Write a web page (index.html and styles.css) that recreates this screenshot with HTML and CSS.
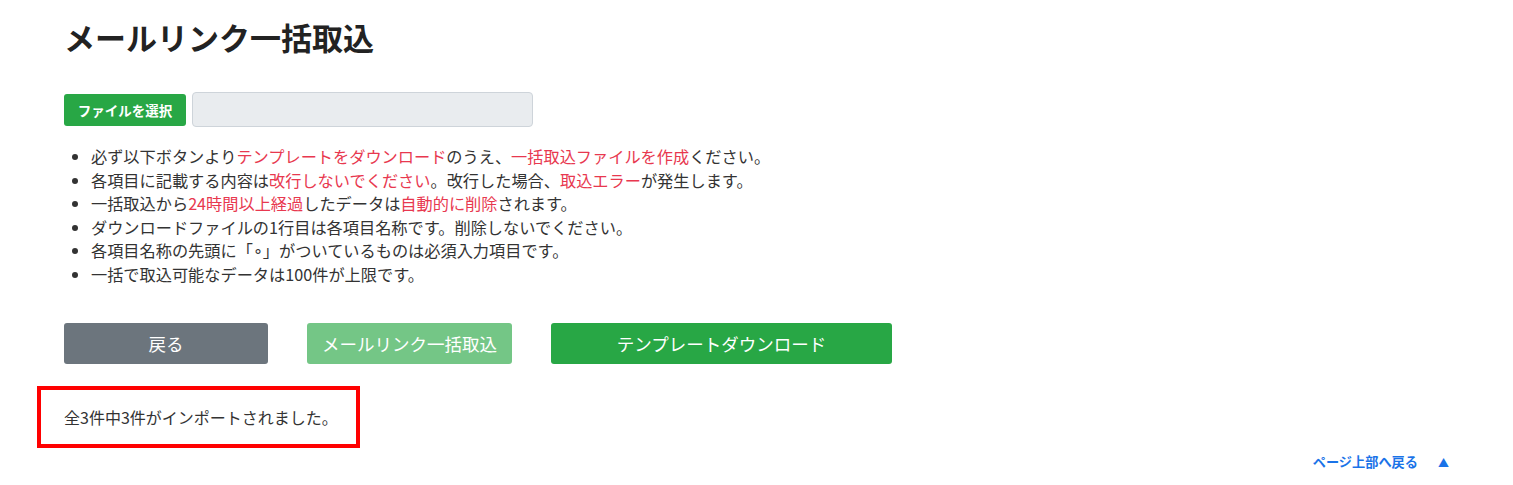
FILE: index.html
```html
<!DOCTYPE html>
<html lang="ja">
<head>
    <meta charset="UTF-8">
    <meta name="viewport" content="width=device-width, initial-scale=1.0">
    <title>メールリンク一括取込</title>
    <link rel="stylesheet" href="styles.css">
</head>
<body>

    <div class="page">
        <h1 class="page-title">メールリンク一括取込</h1>

        <div class="file-row">
            <label class="file-btn" for="importFile">ファイルを選択</label>
            <input type="file" id="importFile" class="file-hidden">
            <div class="file-name"></div>
        </div>

        <ul class="notes">
            <li>必ず以下ボタンより<span class="em">テンプレートをダウンロード</span>のうえ、<span class="em">一括取込ファイルを作成</span>ください。</li>
            <li>各項目に記載する内容は<span class="em">改行しないでください</span>。改行した場合、<span class="em">取込エラー</span>が発生します。</li>
            <li>一括取込から<span class="em">24時間以上経過</span>したデータは<span class="em">自動的に削除</span>されます。</li>
            <li>ダウンロードファイルの1行目は各項目名称です。削除しないでください。</li>
            <li>各項目名称の先頭に「∘」がついているものは必須入力項目です。</li>
            <li>一括で取込可能なデータは100件が上限です。</li>
        </ul>

        <div class="actions">
            <button class="btn btn-back">戻る</button>
            <button class="btn btn-import" disabled>メールリンク一括取込</button>
            <button class="btn btn-template">テンプレートダウンロード</button>
        </div>

        <div class="result">全3件中3件がインポートされました。</div>

        <div class="to-top">
            <a href="#">ページ上部へ戻る<span class="arrow">▲</span></a>
        </div>
    </div>

</body>
</html>
```

FILE: styles.css
```css
body {
    margin: 0;
    font-family: "Noto Sans CJK JP", "Noto Sans", sans-serif;
    color: #333;
    background: #fff;
}

.page {
    padding: 0 64px;
}

.page-title {
    margin: 0;
    padding-top: 17px;
    font-size: 31px;
    line-height: 40px;
    font-weight: 700;
    color: #222;
}

.file-row {
    display: flex;
    align-items: center;
    gap: 6px;
    margin-top: 35px;
    height: 35px;
}

.file-hidden {
    display: none;
}

.file-btn {
    display: flex;
    align-items: center;
    justify-content: center;
    width: 122px;
    height: 32px;
    background-color: #28a745;
    color: #fff;
    font-size: 13.5px;
    font-weight: 700;
    border-radius: 3px;
    cursor: pointer;
}

.file-name {
    width: 339px;
    height: 33px;
    background-color: #e9ecef;
    border: 1px solid #ced4da;
    border-radius: 4px;
}

.notes {
    margin: 18px 0 0;
    padding-left: 27px;
    font-size: 16.2px;
    line-height: 23.6px;
    color: #333;
}

.notes .em {
    color: #e8384f;
}

.actions {
    display: flex;
    gap: 39px;
    margin-top: 36px;
}

.btn {
    height: 41px;
    border: none;
    border-radius: 3px;
    color: #fff;
    font-family: inherit;
    font-size: 17.5px;
    cursor: pointer;
}

.btn-back {
    width: 204px;
    background-color: #6c757d;
}

.btn-import {
    width: 205px;
    background-color: #74c686;
    cursor: default;
}

.btn-template {
    width: 341px;
    background-color: #28a745;
}

.result {
    box-sizing: border-box;
    margin: 22px 0 0 -27px;
    width: 323px;
    height: 62px;
    padding-left: 23px;
    border: 4px solid #f00;
    display: flex;
    align-items: center;
    font-size: 16px;
    color: #333;
}

.to-top {
    display: flex;
    justify-content: flex-end;
    margin-top: 4px;
}

.to-top a {
    color: #1a73e8;
    text-decoration: none;
    font-size: 13.2px;
    font-weight: 700;
    line-height: 20px;
}

.to-top .arrow {
    margin-left: 20px;
    font-size: 11px;
}
```
